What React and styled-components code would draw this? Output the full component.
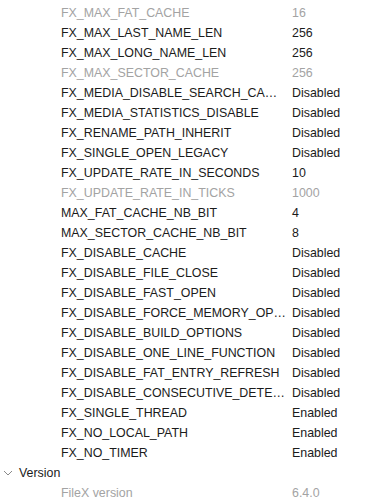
import React from "react";
import styled, { createGlobalStyle } from "styled-components";

const GlobalStyle = createGlobalStyle`
  html, body {
    margin: 0;
    padding: 0;
    background: #ffffff;
  }
  body {
    font-family: "Liberation Sans", Arial, sans-serif;
  }
`;

const options = [
  ["FX_MAX_FAT_CACHE", "16", true],
  ["FX_MAX_LAST_NAME_LEN", "256"],
  ["FX_MAX_LONG_NAME_LEN", "256"],
  ["FX_MAX_SECTOR_CACHE", "256", true],
  ["FX_MEDIA_DISABLE_SEARCH_CACHE", "Disabled"],
  ["FX_MEDIA_STATISTICS_DISABLE", "Disabled"],
  ["FX_RENAME_PATH_INHERIT", "Disabled"],
  ["FX_SINGLE_OPEN_LEGACY", "Disabled"],
  ["FX_UPDATE_RATE_IN_SECONDS", "10"],
  ["FX_UPDATE_RATE_IN_TICKS", "1000", true],
  ["MAX_FAT_CACHE_NB_BIT", "4"],
  ["MAX_SECTOR_CACHE_NB_BIT", "8"],
  ["FX_DISABLE_CACHE", "Disabled"],
  ["FX_DISABLE_FILE_CLOSE", "Disabled"],
  ["FX_DISABLE_FAST_OPEN", "Disabled"],
  ["FX_DISABLE_FORCE_MEMORY_OPERATION", "Disabled"],
  ["FX_DISABLE_BUILD_OPTIONS", "Disabled"],
  ["FX_DISABLE_ONE_LINE_FUNCTION", "Disabled"],
  ["FX_DISABLE_FAT_ENTRY_REFRESH", "Disabled"],
  ["FX_DISABLE_CONSECUTIVE_DETECT", "Disabled"],
  ["FX_SINGLE_THREAD", "Enabled"],
  ["FX_NO_LOCAL_PATH", "Enabled"],
  ["FX_NO_TIMER", "Enabled"],
];

const Tree = styled.div`
  padding-top: 3px;
  width: 371px;
  font-size: 12.4px;
  color: #1b1b1b;
`;

const Row = styled.div`
  display: grid;
  grid-template-columns: 61px 231px 1fr;
  height: 20px;
  line-height: 20px;
  color: ${(p) => (p.$muted ? "#a3a3a3" : "#1b1b1b")};
`;

const Name = styled.span`
  grid-column: 2;
  padding-right: 6px;
  white-space: nowrap;
  overflow: hidden;
  text-overflow: ellipsis;
`;

const Value = styled.span`
  white-space: nowrap;
`;

const Group = styled.div`
  display: flex;
  align-items: center;
  gap: 6px;
  height: 20px;
  padding-left: 3px;
  line-height: 20px;
`;

const Chevron = () => (
  <svg width="10" height="10" viewBox="0 0 10 10">
    <path d="M1 3 L5 7 L9 3" fill="none" stroke="#8a8a8a" strokeWidth="1" />
  </svg>
);

export default function App() {
  return (
    <>
      <GlobalStyle />
      <Tree>
        {options.map(([name, value, muted]) => (
          <Row key={name} $muted={muted}>
            <Name>{name}</Name>
            <Value>{value}</Value>
          </Row>
        ))}
        <Group>
          <Chevron />
          <span>Version</span>
        </Group>
        <Row $muted>
          <Name>FileX version</Name>
          <Value>6.4.0</Value>
        </Row>
      </Tree>
    </>
  );
}
